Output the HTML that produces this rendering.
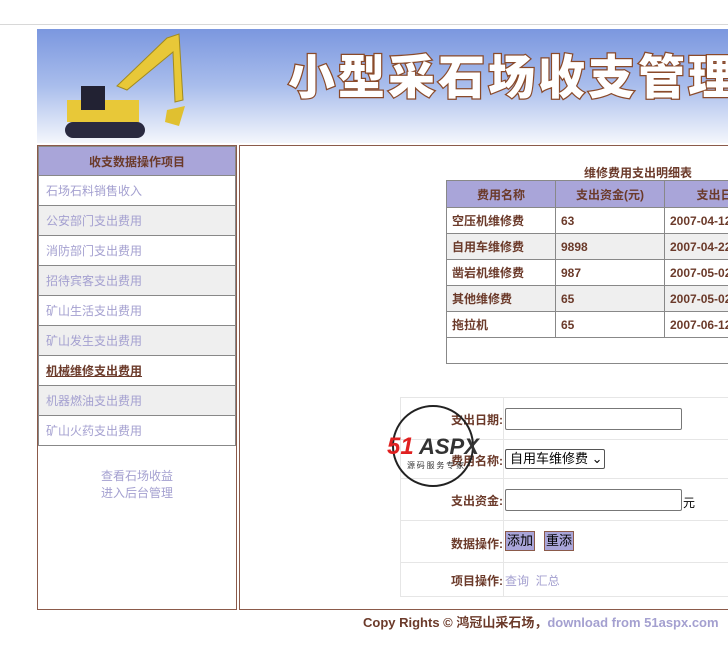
<!DOCTYPE html>
<html><head><meta charset="utf-8"><style>
*{margin:0;padding:0;box-sizing:border-box}
body{width:728px;height:670px;overflow:hidden;background:#fff;font-family:"Liberation Sans","Noto Sans CJK SC",sans-serif;font-size:12px;position:relative}
.abs{position:absolute}
#line{left:0;top:24px;width:728px;height:1px;background:#d8d8d8}
#ban{left:37px;top:29px;width:691px;height:114px;background:linear-gradient(#7b97df,#a9bdec 50%,#f4f6fc)}
#title{left:288px;top:44px;font-size:47px;font-weight:900;color:#fff;letter-spacing:3px;white-space:nowrap;-webkit-text-stroke:2.5px #8a4a2a;paint-order:stroke fill;font-family:"Noto Sans CJK SC",sans-serif;line-height:60px}
#left{left:37px;top:145px;width:200px;height:465px;border:1px solid #8b5a4a}
.row{height:30px;border-bottom:1px solid #888;border-left:1px solid #888;border-right:1px solid #888;line-height:30px;padding-left:7px;color:#a4a0d0;font-size:12px}
.g{background:#efefef}
#right{left:239px;top:145px;width:495px;height:465px;border:1px solid #8b5a4a}
table{border-collapse:collapse}
#tb{left:446px;top:180px;width:330px;table-layout:fixed}
#tb td{border:1px solid #888;height:26px;padding-left:5px;color:#6b3a2a;font-weight:bold;font-size:12px;white-space:nowrap;overflow:hidden}
#tb th{background:#a9a5d9;border:1px solid #888;height:27px;color:#6b3a2a;font-size:12px}
.fr{position:absolute;left:400px;width:330px;border-top:1px solid #e6e6e6}
.lab{position:absolute;left:451px;color:#6b3a2a;font-weight:bold;font-size:12px}
input.t{position:absolute;left:505px;width:177px;height:22px;border:1px solid #777;border-radius:2px}
.btn{position:absolute;background:#a9a5d9;border:1px solid #8b5a4a;font-size:13px;height:20px;line-height:18px;padding:0 1px;color:#000}
</style></head><body>
<div class="abs" id="line"></div>
<div class="abs" id="ban"></div>
<svg class="abs" style="left:55px;top:30px" width="130" height="112" viewBox="0 0 130 112">
<path d="M112 8 L124 4 L128 70 L120 72 L118 22 L72 60 L62 56 Z" fill="#e8c838" stroke="#a08a20"/>
<path d="M112 80 L130 76 L124 96 L110 92 Z" fill="#e0c030"/>
<rect x="12" y="70" width="72" height="22" fill="#e8c838"/>
<rect x="26" y="56" width="24" height="24" fill="#223"/>
<rect x="10" y="92" width="80" height="16" rx="8" fill="#2a2a40"/>
</svg>
<div class="abs" id="title">小型采石场收支管理</div>
<div class="abs" id="left">
<div class="row" style="background:#a9a5d9;text-align:center;padding:0;color:#6b3a2a;font-weight:bold;height:30px;border-top:1px solid #888">收支数据操作项目</div>
<div class="row">石场石料销售收入</div>
<div class="row g">公安部门支出费用</div>
<div class="row">消防部门支出费用</div>
<div class="row g">招待宾客支出费用</div>
<div class="row">矿山生活支出费用</div>
<div class="row g">矿山发生支出费用</div>
<div class="row" style="color:#6b3a2a;font-weight:bold;text-decoration:underline">机械维修支出费用</div>
<div class="row g">机器燃油支出费用</div>
<div class="row">矿山火药支出费用</div>
<div style="text-align:center;color:#a4a0d0;margin-top:22px;line-height:17px">查看石场收益<br>进入后台管理</div>
</div>
<div class="abs" id="right"></div>
<div class="abs" style="left:584px;top:164px;color:#6b3a2a;font-weight:bold">维修费用支出明细表</div>
<table class="abs" id="tb">
<colgroup><col style="width:109px"><col style="width:109px"><col style="width:112px"></colgroup>
<tr><th>费用名称</th><th>支出资金(元)</th><th>支出日期</th></tr>
<tr><td>空压机维修费</td><td>63</td><td>2007-04-12</td></tr>
<tr class="g"><td>自用车维修费</td><td>9898</td><td>2007-04-22</td></tr>
<tr><td>凿岩机维修费</td><td>987</td><td>2007-05-02</td></tr>
<tr class="g"><td>其他维修费</td><td>65</td><td>2007-05-02</td></tr>
<tr><td>拖拉机</td><td>65</td><td>2007-06-12</td></tr>
<tr><td colspan="3" style="height:26px"></td></tr>
</table>
<div class="abs" style="left:400px;top:397px;width:330px;height:200px;border:1px solid #e6e6e6"></div>
<div class="abs" style="left:503px;top:397px;width:1px;height:200px;background:#e6e6e6"></div>
<div class="fr" style="top:439px"></div><div class="fr" style="top:478px"></div><div class="fr" style="top:520px"></div><div class="fr" style="top:562px"></div>
<div class="lab" style="top:411px">支出日期:</div><input class="t" style="top:408px">
<div class="lab" style="top:452px">费用名称:</div>
<div class="abs" style="left:505px;top:449px;width:100px;height:20px;border:1px solid #555;border-radius:2px;font-size:13px;line-height:18px;padding-left:4px">自用车维修费 ⌄</div>
<div class="lab" style="top:492px">支出资金:</div><input class="t" style="top:489px"><div class="abs" style="left:683px;top:494px">元</div>
<div class="lab" style="top:535px">数据操作:</div>
<div class="btn" style="left:505px;top:531px">添加</div><div class="btn" style="left:544px;top:531px">重添</div>
<div class="lab" style="top:572px">项目操作:</div>
<div class="abs" style="left:505px;top:572px;color:#a4a0d0">查询 &nbsp;汇总</div>
<svg class="abs" style="left:385px;top:402px" width="130" height="90"><circle cx="48" cy="44" r="40" fill="none" stroke="#222" stroke-width="2"/><text x="2" y="52" font-size="24" font-weight="bold" font-style="italic" fill="#e02020" font-family="Liberation Sans">51</text><text x="34" y="52" font-size="22" font-weight="bold" font-style="italic" fill="#333" font-family="Liberation Sans">ASPX</text><text x="22" y="66" font-size="8" fill="#333" font-family="Noto Sans CJK SC">源 码 服 务 专 家</text></svg>
<div class="abs" style="left:363px;top:612px;font-size:13px;font-weight:bold;color:#6b3a2a;white-space:nowrap">Copy Rights © 鸿冠山采石场，<span style="color:#a4a0d0">download from 51aspx.com</span></div>
</body></html>
